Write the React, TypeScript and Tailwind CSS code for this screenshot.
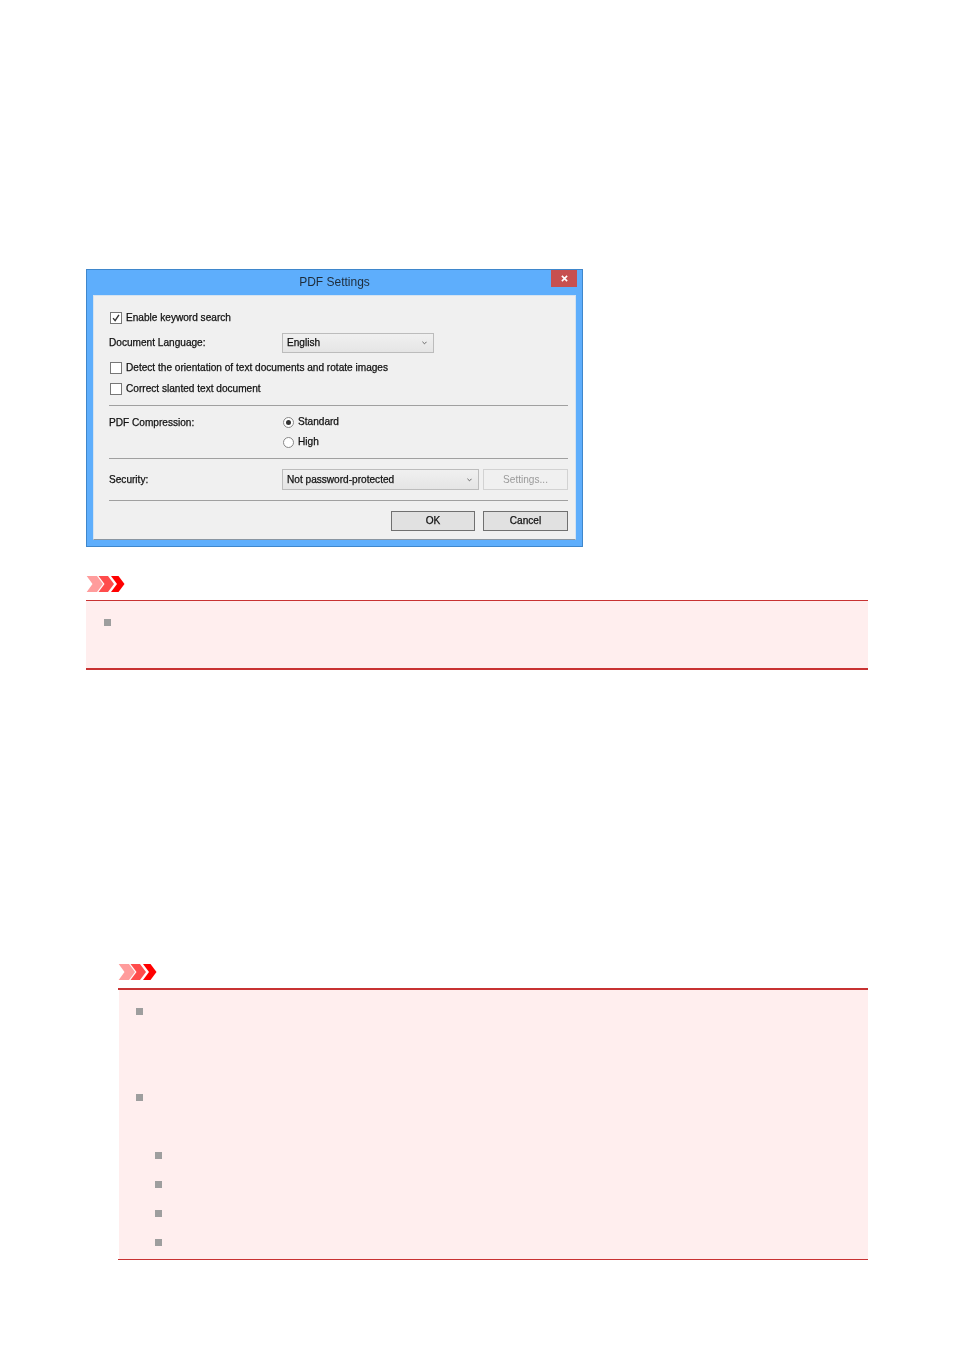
const font = { fontFamily: '"Liberation Sans", Arial, sans-serif' };

function Chevrons() {
  return (
    <svg width="40" height="16" viewBox="0 0 40 16" className="block">
      <polygon points="0.7,0 11,0 17,8 11,16 0.7,16 6.5,8" fill="#ff9c9c" />
      <polygon points="12.5,0 22,0 28,8 22,16 12.5,16 18.5,8" fill="#ff4c4c" />
      <polygon points="25,0 32.5,0 38.5,8 32.5,16 25,16 31,8" fill="#ff0000" />
    </svg>
  );
}

function Bullet({ className = '' }: { className?: string }) {
  return <span className={`block size-[7px] bg-[#9e9e9e] ${className}`} />;
}

function Check({ checked = false, label }: { checked?: boolean; label: string }) {
  return (
    <label className="ml-px flex items-center gap-[4px]">
      <span className="flex size-[12px] items-center justify-center border border-[#777] bg-white">
        {checked && (
          <svg width="8" height="8" viewBox="0 0 9 9">
            <path d="M1.2 4.6 L3.5 7.4 L7.8 1" fill="none" stroke="#333" strokeWidth="1.6" />
          </svg>
        )}
      </span>
      <span>{label}</span>
    </label>
  );
}

function Radio({ checked = false, label }: { checked?: boolean; label: string }) {
  return (
    <div className="flex items-center gap-[4px]">
      <span className="flex size-[11px] items-center justify-center rounded-full border border-[#888] bg-white">
        {checked && <span className="size-[5px] rounded-full bg-[#333]" />}
      </span>
      <span>{label}</span>
    </div>
  );
}

function Select({ value, className }: { value: string; className: string }) {
  return (
    <div className={`flex items-center justify-between border border-[#bcbcbc] bg-gradient-to-b from-[#f0f0f0] to-[#e5e5e5] pr-[6px] pl-[4px] ${className}`}>
      <span>{value}</span>
      <svg width="5" height="4" viewBox="0 0 6 4">
        <path d="M0.5 0.5 L3 3 L5.5 0.5" fill="none" stroke="#666" strokeWidth="1.2" />
      </svg>
    </div>
  );
}

function Dialog() {
  return (
    <div className="flex h-[278px] w-[497px] flex-col border border-[#3f87cc] bg-[#5eaefc] text-[10.1px] text-[#111] blur-[0.35px] [-webkit-text-stroke:0.25px_#111]">
      {/* title bar */}
      <div className="flex h-[25px] shrink-0">
        <div className="flex-1 pt-[5px] pl-[31px] text-center text-[12px] leading-[15px] text-[#1e2c3a] [-webkit-text-stroke:0]">PDF Settings</div>
        <div className="mr-[5px] flex h-[17px] w-[26px] items-center justify-center bg-[#c75050]">
          <svg width="7" height="7" viewBox="0 0 8 8">
            <path d="M1 1 L7 7 M7 1 L1 7" stroke="#fff" strokeWidth="1.8" />
          </svg>
        </div>
      </div>

      {/* panel */}
      <div className="mx-[6px] flex h-[245px] flex-col border border-[#d5e3f0] border-b-[#8a96a2] bg-[#f0f0f0] pr-[7px] pl-[15px]">
        <div className="mt-[15px] flex h-[14px] items-center">
          <Check checked label="Enable keyword search" />
        </div>
        <div className="mt-[8px] flex h-[20px] items-center">
          <span className="w-[173px]">Document Language:</span>
          <Select value="English" className="h-[20px] w-[152px]" />
        </div>
        <div className="mt-[8px] flex h-[14px] items-center">
          <Check label="Detect the orientation of text documents and rotate images" />
        </div>
        <div className="mt-[7px] flex h-[14px] items-center">
          <Check label="Correct slanted text document" />
        </div>
        <div className="mt-[9px] h-px bg-[#a0a0a0]" />
        <div className="mt-[9px] flex">
          <span className="w-[173px] pt-px leading-[14px]">PDF Compression:</span>
          <div className="flex flex-col gap-[6px]">
            <div className="flex h-[14px] items-center pl-px">
              <Radio checked label="Standard" />
            </div>
            <div className="flex h-[14px] items-center pl-px">
              <Radio label="High" />
            </div>
          </div>
        </div>
        <div className="mt-[9px] h-px bg-[#a0a0a0]" />
        <div className="mt-[10px] flex h-[21px] items-center">
          <span className="w-[173px]">Security:</span>
          <Select value="Not password-protected" className="h-[21px] w-[197px]" />
          <div className="ml-[4px] flex h-[21px] w-[85px] items-center justify-center border border-[#d2d2d2] bg-[#f0f0f0] text-[#9a9a9a] [-webkit-text-stroke:0]">Settings...</div>
        </div>
        <div className="mt-[10px] h-px bg-[#a0a0a0]" />
        <div className="mt-[10px] flex justify-end gap-[8px]">
          <div className="flex h-[20px] w-[84px] items-center justify-center border border-[#707070] bg-[#e1e1e1]">OK</div>
          <div className="flex h-[20px] w-[85px] items-center justify-center border border-[#707070] bg-[#e1e1e1]">Cancel</div>
        </div>
      </div>
    </div>
  );
}

export default function App() {
  return (
    <div className="h-[1350px] w-[954px] bg-white px-[86px] pt-[269px]" style={font}>
      <Dialog />

      {/* first note */}
      <div className="mt-[29px]">
        <Chevrons />
      </div>
      <div className="mt-[8px] h-[70px] border-t border-b-2 border-[#c83232] bg-[#ffeeee] pt-[18px] pl-[18px]">
        <Bullet />
      </div>

      {/* second note */}
      <div className="mt-[294px] ml-[32px]">
        <Chevrons />
      </div>
      <div className="mt-[8px] ml-[32px] h-[272px] border-t-2 border-b border-[#c83232]">
        <div className="ml-px h-full bg-[#ffeeee] pt-[18px] pl-[17px]">
          <Bullet />
          <Bullet className="mt-[79px]" />
          <div className="flex flex-col gap-[22px] pt-[51px] pl-[19px]">
            <Bullet />
            <Bullet />
            <Bullet />
            <Bullet />
          </div>
        </div>
      </div>
    </div>
  );
}
